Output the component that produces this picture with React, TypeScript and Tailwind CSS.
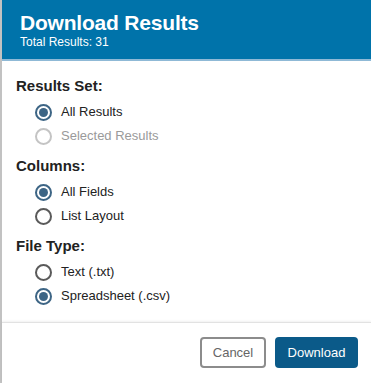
import { useState } from 'react';

type Option = { id: string; label: string; disabled?: boolean };

const sections: { name: string; title: string; options: Option[]; initial: string }[] = [
  {
    name: 'resultsSet',
    title: 'Results Set:',
    initial: 'all',
    options: [
      { id: 'all', label: 'All Results' },
      { id: 'selected', label: 'Selected Results', disabled: true },
    ],
  },
  {
    name: 'columns',
    title: 'Columns:',
    initial: 'fields',
    options: [
      { id: 'fields', label: 'All Fields' },
      { id: 'list', label: 'List Layout' },
    ],
  },
  {
    name: 'fileType',
    title: 'File Type:',
    initial: 'csv',
    options: [
      { id: 'txt', label: 'Text (.txt)' },
      { id: 'csv', label: 'Spreadsheet (.csv)' },
    ],
  },
];

function Radio({ checked, disabled }: { checked: boolean; disabled?: boolean }) {
  return (
    <span
      className={`flex items-center justify-center w-[17px] h-[17px] rounded-full border-[2px] ${
        checked ? 'border-[#3d6585]' : disabled ? 'border-[#c4c4c4]' : 'border-[#5a5a5a]'
      } bg-white`}
    >
      {checked && <span className="w-[9px] h-[9px] rounded-full bg-[#3d6585]" />}
    </span>
  );
}

export default function App() {
  const [values, setValues] = useState<Record<string, string>>(
    Object.fromEntries(sections.map((s) => [s.name, s.initial]))
  );

  return (
    <div
      className="w-[371px] h-[383px] flex flex-col bg-white border-l-2 border-[#c2c2c2] text-[#222]"
      style={{ fontFamily: '"Liberation Sans", Arial, sans-serif' }}
    >
      {/* Header */}
      <div className="h-[61px] bg-[#0073aa] border-b-2 border-[#8fb9d6] pl-[18px] pt-[11px] text-white">
        <h1 className="text-[21px] font-bold leading-[24px] tracking-[-0.2px]">Download Results</h1>
        <p className="text-[12px] leading-[14px]">Total Results: 31</p>
      </div>

      {/* Body */}
      <div className="flex-1 pl-[14px] pt-[15px]">
        {sections.map((section) => (
          <div key={section.name} className="mb-[8px]">
            <h2 className="text-[15px] font-bold leading-[20px] mb-[4px]">{section.title}</h2>
            <div className="flex flex-col pl-[19px]">
              {section.options.map((opt) => {
                const checked = values[section.name] === opt.id;
                return (
                  <button
                    key={opt.id}
                    disabled={opt.disabled}
                    onClick={() => setValues({ ...values, [section.name]: opt.id })}
                    className="flex items-center gap-[9px] h-[24px] text-left"
                  >
                    <Radio checked={checked} disabled={opt.disabled} />
                    <span className={`text-[13px] ${opt.disabled ? 'text-[#9a9a9a]' : 'text-[#222]'}`}>
                      {opt.label}
                    </span>
                  </button>
                );
              })}
            </div>
          </div>
        ))}
      </div>

      {/* Footer */}
      <div className="h-[61px] border-t border-[#e2e2e2] shadow-[0_-1px_2px_rgba(0,0,0,0.06)] flex items-center justify-end gap-[9px] pr-[13px] pb-[1px]">
        <button className="h-[31px] w-[66px] rounded-[4px] border-2 border-[#8c8c8c] bg-white text-[13px] text-[#666]">
          Cancel
        </button>
        <button className="h-[31px] w-[83px] rounded-[4px] bg-[#0b5a89] text-[13px] text-white">
          Download
        </button>
      </div>
    </div>
  );
}
